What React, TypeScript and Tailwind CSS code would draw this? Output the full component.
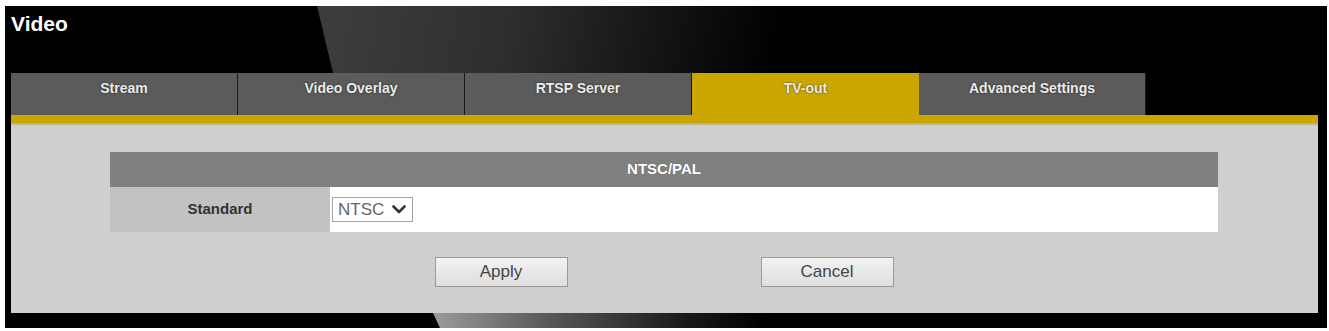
import React from "react";

const tabs = ["Stream", "Video Overlay", "RTSP Server", "TV-out", "Advanced Settings"];

export default function App() {
  return (
    <div className="w-[1329px] h-[331px] bg-white pt-[6px] pl-[5px] font-['Liberation_Sans',Arial,sans-serif]">
      <div className="relative w-[1322px] h-[322px] bg-black overflow-hidden">
        {/* decorative background shapes */}
        <div className="absolute inset-0 [clip-path:polygon(312px_0,328px_67px,100%_67px,100%_0)] bg-[linear-gradient(100deg,#3c3c3c_330px,#2e2e2e_500px,#141414_650px,#000_770px)]" />
        <div className="absolute inset-0 [clip-path:polygon(428px_307px,435px_322px,100%_322px,100%_307px)] bg-[linear-gradient(to_right,#9a9a9a_430px,#5a5a5a_540px,#1a1a1a_680px,#000_760px)]" />

        <div className="relative flex flex-col h-full">
          <div className="h-[67px] pl-[6px] pt-[6px]">
            <h1 className="text-[21px] font-bold text-white leading-[24px] [text-shadow:0_0_2px_rgba(0,0,0,0.6)]">Video</h1>
          </div>

          <div className="flex ml-[6px] h-[42px]">
            {tabs.map((t) => {
              const active = t === "TV-out";
              return (
                <div
                  key={t}
                  className={
                    active
                      ? "w-[227px] h-full bg-[#cba600] flex items-start justify-center pt-[5px]"
                      : "w-[227px] h-full bg-[#5b5b5b] border-r border-[#1a1a1a] flex items-start justify-center pt-[5px]"
                  }
                >
                  <span className="text-[14px] font-bold text-[#ececec] [text-shadow:0_0_2px_rgba(0,0,0,0.7)]">{t}</span>
                </div>
              );
            })}
          </div>

          <div className="ml-[6px] w-[1307px] h-[8px] bg-[#cba600]" />
          <div className="ml-[6px] w-[1307px] h-[2px] bg-[#b4b694]" />

          <div className="ml-[6px] w-[1307px] h-[188px] bg-[#cfcfcf] pt-[27px]">
            <div className="ml-[99px] w-[1108px]">
              <div className="h-[35px] bg-[#808080] flex items-center justify-center">
                <span className="text-[15px] font-bold text-white [text-shadow:0_0_1px_rgba(0,0,0,0.4)]">NTSC/PAL</span>
              </div>
              <div className="flex h-[45px]">
                <div className="w-[220px] bg-[#c2c2c2] flex items-center justify-center">
                  <span className="text-[15px] font-bold text-[#333]">Standard</span>
                </div>
                <div className="flex-1 bg-white flex items-center pl-[2px]">
                  <div className="w-[81px] h-[25px] border border-[#a5a5a5] flex items-center pl-[5px] gap-[8px]">
                    <span className="text-[17px] text-[#666] leading-none">NTSC</span>
                    <svg width="14" height="9" viewBox="0 0 14 9" fill="none">
                      <path d="M1.5 1.5 L7 7 L12.5 1.5" stroke="#333" strokeWidth="2.6" strokeLinecap="round" strokeLinejoin="round" />
                    </svg>
                  </div>
                </div>
              </div>
              <div className="flex justify-center gap-[193px] mt-[25px]">
                <button className="w-[133px] h-[30px] border border-[#9a9a9a] bg-[linear-gradient(#f2f2f2,#dedede)] text-[17px] text-[#444]">Apply</button>
                <button className="w-[133px] h-[30px] border border-[#9a9a9a] bg-[linear-gradient(#f2f2f2,#dedede)] text-[17px] text-[#444]">Cancel</button>
              </div>
            </div>
          </div>
        </div>
      </div>
    </div>
  );
}
